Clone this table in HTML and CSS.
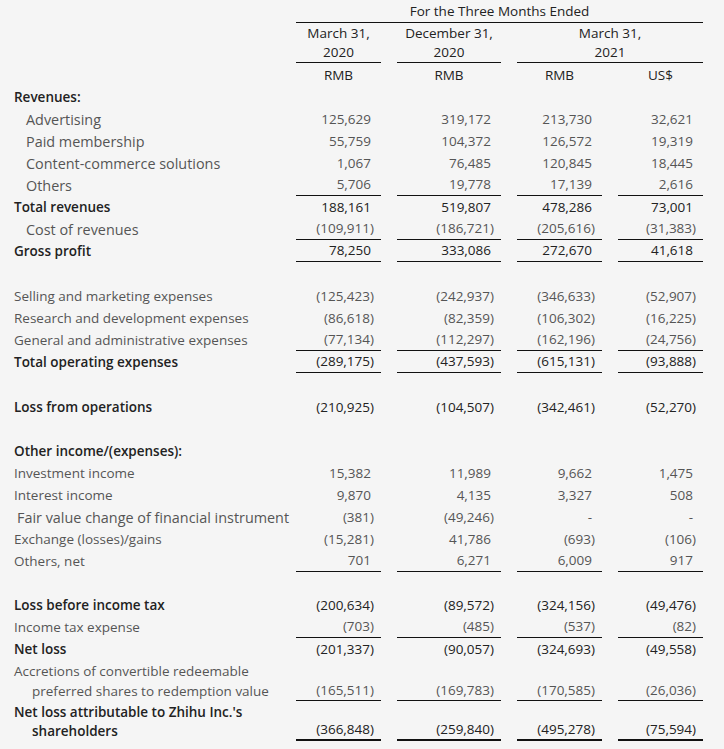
FILE: index.html
```html
<!DOCTYPE html>
<html>
<head>
<meta charset="utf-8">
<link rel="stylesheet" href="styles.css">
</head>
<body>
<table class="fin">
  <colgroup>
    <col class="c-label"><col class="c-num"><col class="c-wide"><col class="c-num"><col class="c-num">
  </colgroup>
  <thead>
    <tr class="h1"><th></th><th colspan="4" class="ul">For the Three Months Ended</th></tr>
    <tr class="h2"><th></th><th class="ul">March 31,<br>2020</th><th class="ul">December 31,<br>2020</th><th colspan="2" class="ul">March 31,<br>2021</th></tr>
    <tr class="h3"><th></th><th>RMB</th><th>RMB</th><th>RMB</th><th>US$</th></tr>
  </thead>
  <tbody>
    <tr class="st"><td>Revenues:</td><td></td><td></td><td></td><td></td></tr>
    <tr><td class="ind">Advertising</td><td>125,629</td><td>319,172</td><td>213,730</td><td>32,621</td></tr>
    <tr><td class="ind">Paid membership</td><td>55,759</td><td>104,372</td><td>126,572</td><td>19,319</td></tr>
    <tr><td class="ind">Content-commerce solutions</td><td>1,067</td><td>76,485</td><td>120,845</td><td>18,445</td></tr>
    <tr class="u"><td class="ind">Others</td><td>5,706</td><td>19,778</td><td>17,139</td><td>2,616</td></tr>
    <tr class="st"><td>Total revenues</td><td>188,161</td><td>519,807</td><td>478,286</td><td>73,001</td></tr>
    <tr class="u"><td class="ind">Cost of revenues</td><td class="neg">(109,911)</td><td class="neg">(186,721)</td><td class="neg">(205,616)</td><td class="neg">(31,383)</td></tr>
    <tr class="st u"><td>Gross profit</td><td>78,250</td><td>333,086</td><td>272,670</td><td>41,618</td></tr>
    <tr class="blank wide"><td></td><td></td><td></td><td></td><td></td></tr>
    <tr><td>Selling and marketing expenses</td><td class="neg">(125,423)</td><td class="neg">(242,937)</td><td class="neg">(346,633)</td><td class="neg">(52,907)</td></tr>
    <tr><td>Research and development expenses</td><td class="neg">(86,618)</td><td class="neg">(82,359)</td><td class="neg">(106,302)</td><td class="neg">(16,225)</td></tr>
    <tr class="u"><td>General and administrative expenses</td><td class="neg">(77,134)</td><td class="neg">(112,297)</td><td class="neg">(162,196)</td><td class="neg">(24,756)</td></tr>
    <tr class="st u"><td>Total operating expenses</td><td class="neg">(289,175)</td><td class="neg">(437,593)</td><td class="neg">(615,131)</td><td class="neg">(93,888)</td></tr>
    <tr class="blank wide"><td></td><td></td><td></td><td></td><td></td></tr>
    <tr class="st"><td>Loss from operations</td><td class="neg">(210,925)</td><td class="neg">(104,507)</td><td class="neg">(342,461)</td><td class="neg">(52,270)</td></tr>
    <tr class="blank"><td></td><td></td><td></td><td></td><td></td></tr>
    <tr class="st"><td>Other income/(expenses):</td><td></td><td></td><td></td><td></td></tr>
    <tr><td>Investment income</td><td>15,382</td><td>11,989</td><td>9,662</td><td>1,475</td></tr>
    <tr><td>Interest income</td><td>9,870</td><td>4,135</td><td>3,327</td><td>508</td></tr>
    <tr><td class="sp">Fair value change of financial instrument</td><td class="neg">(381)</td><td class="neg">(49,246)</td><td>-</td><td>-</td></tr>
    <tr><td>Exchange (losses)/gains</td><td class="neg">(15,281)</td><td>41,786</td><td class="neg">(693)</td><td class="neg">(106)</td></tr>
    <tr class="u"><td>Others, net</td><td>701</td><td>6,271</td><td>6,009</td><td>917</td></tr>
    <tr class="blank"><td></td><td></td><td></td><td></td><td></td></tr>
    <tr class="st"><td>Loss before income tax</td><td class="neg">(200,634)</td><td class="neg">(89,572)</td><td class="neg">(324,156)</td><td class="neg">(49,476)</td></tr>
    <tr class="u"><td>Income tax expense</td><td class="neg">(703)</td><td class="neg">(485)</td><td class="neg">(537)</td><td class="neg">(82)</td></tr>
    <tr class="st"><td>Net loss</td><td class="neg">(201,337)</td><td class="neg">(90,057)</td><td class="neg">(324,693)</td><td class="neg">(49,558)</td></tr>
    <tr class="u two"><td class="hang">Accretions of convertible redeemable<br>preferred shares to redemption value</td><td class="neg">(165,511)</td><td class="neg">(169,783)</td><td class="neg">(170,585)</td><td class="neg">(26,036)</td></tr>
    <tr class="st uu two"><td class="hang">Net loss attributable to Zhihu Inc.'s<br>shareholders</td><td class="neg">(366,848)</td><td class="neg">(259,840)</td><td class="neg">(495,278)</td><td class="neg">(75,594)</td></tr>
  </tbody>
</table>
</body>
</html>
```

FILE: styles.css
```css
html, body {
  margin: 0;
  padding: 0;
  background: #f5f5f5;
}

.fin {
  font-family: "Open Sans", "Liberation Sans", sans-serif;
  font-size: 13.5px;
  color: #555;
  border-collapse: separate;
  border-spacing: 16px 0;
  margin-left: -16px;
  width: 735px;
  table-layout: fixed;
}

.c-label { width: 280px; }
.c-num { width: 85px; }
.c-wide { width: 104px; }

.fin th {
  font-weight: 400;
  color: #222;
  text-align: center;
  padding: 0;
  vertical-align: middle;
  white-space: nowrap;
}

.fin .h1 th { height: 22px; line-height: 22px; }
.fin .h2 th { line-height: 19px; padding-top: 1px; height: 38px; }
.fin .h3 th { height: 22px; line-height: 22px; padding-top: 1px; }

.fin th.ul { border-bottom: 1px solid #111; }

.fin td {
  height: 22px;
  line-height: 21px;
  padding: 0 10px 0 0;
  text-align: right;
  vertical-align: bottom;
  white-space: nowrap;
}

.fin td.neg { padding-right: 7px; }

.fin td:first-child {
  text-align: left;
  padding-left: 14px;
  padding-right: 0;
}

.fin td.ind { padding-left: 26px; font-size: 14.4px; }
.fin td.sp { padding-left: 17px; font-size: 14.4px; }
.fin td.hang { padding-left: 32px; text-indent: -18px; }

.fin tr.u td { height: 21px; }
.fin tr.wide td { height: 23px; }

.fin tr.two td { height: 40px; line-height: 20px; }
.fin tr.uu td { height: 38px; line-height: 19px; }

.fin tr.st td { color: #222; }
.fin tr.st td:first-child { font-weight: 600; }

.fin tr.u td:not(:first-child) { border-bottom: 1px solid #111; }
.fin tr.uu td:not(:first-child) { border-bottom: 2px solid #111; }
```
